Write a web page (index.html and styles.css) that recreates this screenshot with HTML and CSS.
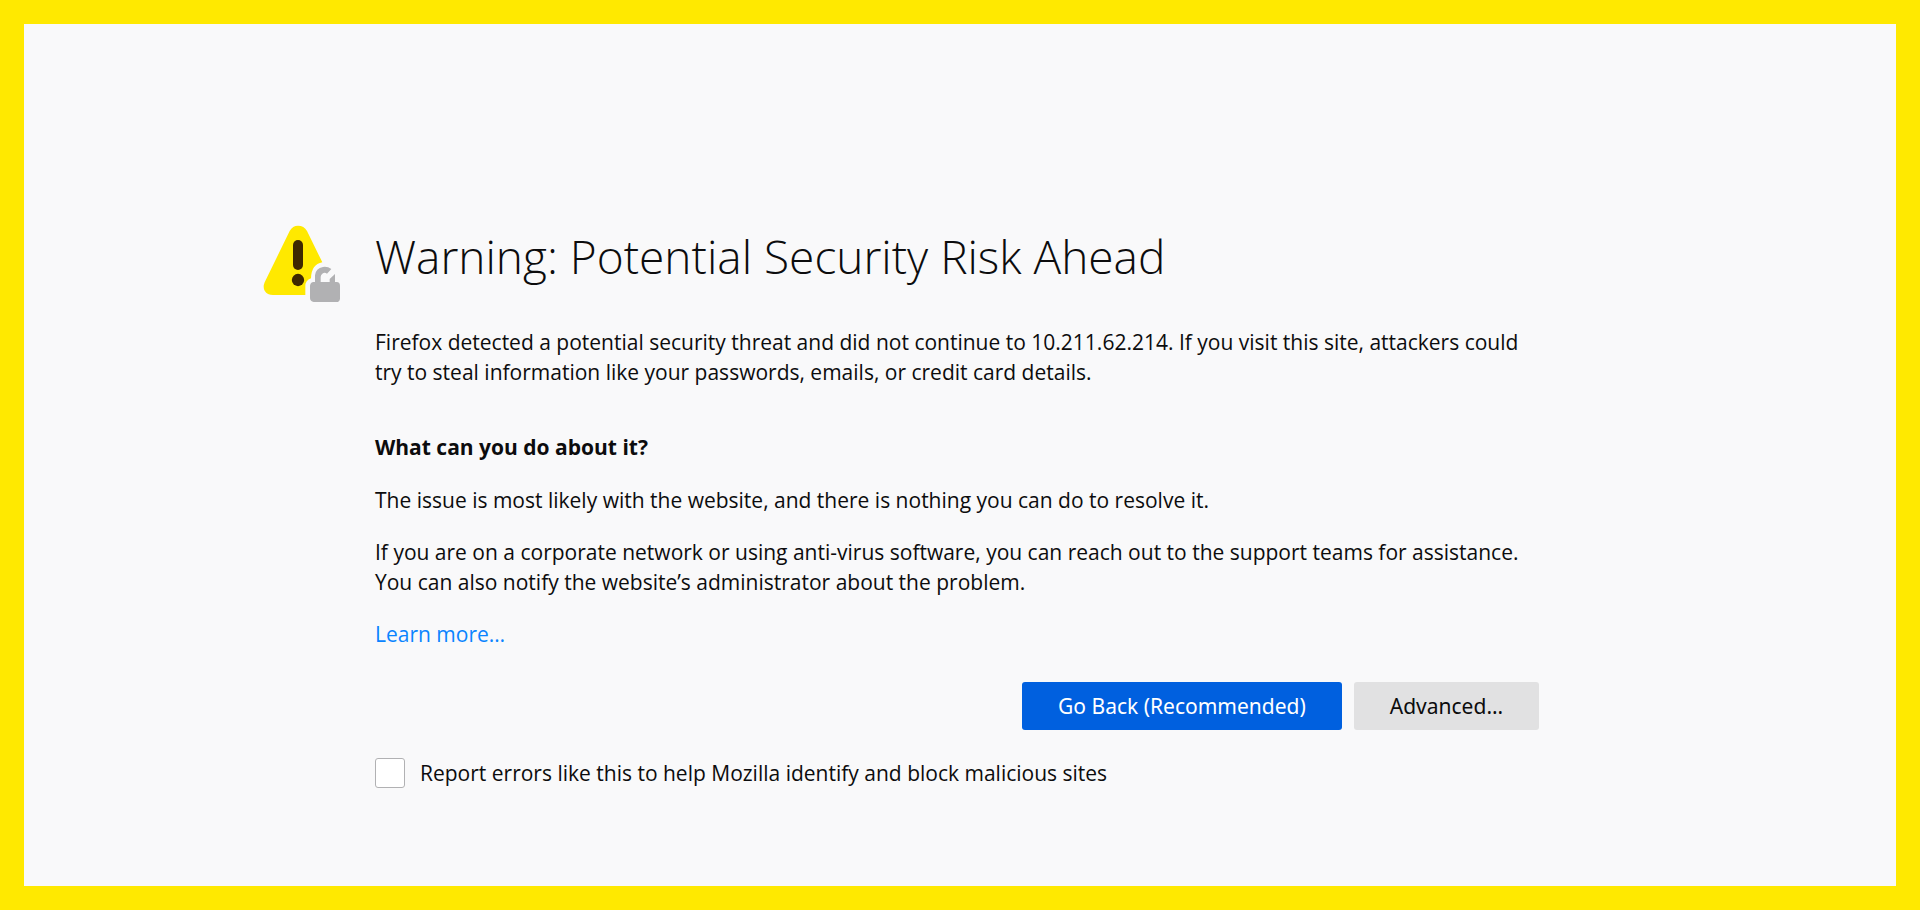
FILE: index.html
```html
<!DOCTYPE html>
<html lang="en">
<head>
<meta charset="utf-8">
<meta name="viewport" content="width=device-width, initial-scale=1">
<title>Warning: Potential Security Risk Ahead</title>
<link rel="stylesheet" href="styles.css">
</head>
<body>
<main class="page">
  <div class="container">
    <svg class="warning-icon" viewBox="39 30 234 234" aria-hidden="true">
      <path class="triangle" d="M119 48Q128 32 144 32Q162 32 171 48L217 142Q184 148 183 190Q166 196 166 214V240H69Q52 240 44 227Q38 216 44 202Z"/>
      <rect class="mark" x="129" y="75" width="30" height="90" rx="15"/>
      <circle class="mark" cx="144" cy="195" r="18.500"/>
      <path class="lock" d="M195 201V181Q197 160 219 156Q233 154 244 162L231 176Q224 171 217 176Q212 180 212 186V201H239V192L255 177V201H260Q270 202 270 212V251Q269 261 259 261H191Q181 260 180 250V212Q181 202 191 201Z"/>
    </svg>
    <div class="content">
      <h1 class="title">Warning: Potential Security Risk Ahead</h1>
      <p class="intro">Firefox detected a potential security threat and did not continue to 10.211.62.214. If you visit this site, attackers could<br>try to steal information like your passwords, emails, or credit card details.</p>
      <h2 class="subtitle">What can you do about it?</h2>
      <p class="text">The issue is most likely with the website, and there is nothing you can do to resolve it.</p>
      <p class="text">If you are on a corporate network or using anti-virus software, you can reach out to the support teams for assistance.<br>You can also notify the website’s administrator about the problem.</p>
      <p class="text"><a class="link" href="#">Learn more…</a></p>
      <div class="buttons">
        <button class="button primary" type="button">Go Back (Recommended)</button>
        <button class="button" type="button">Advanced…</button>
      </div>
      <div class="report">
        <input class="checkbox" type="checkbox" id="report">
        <label for="report">Report errors like this to help Mozilla identify and block malicious sites</label>
      </div>
    </div>
  </div>
</main>
</body>
</html>
```
FILE: styles.css
```css
* {
  box-sizing: border-box;
}

body {
  margin: 0;
  background: #f9f9fa;
  color: #0c0c0d;
  font-family: "Segoe UI", "Open Sans", "Noto Sans", sans-serif;
  font-size: 21px;
  line-height: 30px;
}

.page {
  display: flex;
  justify-content: center;
  min-height: 100vh;
  padding: 201px 90px 24px;
  border: 24px solid #ffe900;
}

.container {
  display: flex;
  align-items: flex-start;
  gap: 34px;
  width: 100%;
  max-width: 1394px;
  padding-right: 118px;
}

.warning-icon {
  flex: none;
  width: 78px;
  height: 78px;
}

.triangle {
  fill: #ffe900;
}

.mark {
  fill: #3e2800;
}

.lock {
  fill: #b1b1b3;
}

.content {
  flex: 1;
  min-width: 0;
}

.title {
  margin: 0 0 40px;
  font-size: 46px;
  font-weight: 300;
  line-height: 62px;
}

.intro {
  margin: 0 0 45px;
}

.subtitle {
  margin: 0 0 23px;
  font-size: 21px;
  font-weight: 700;
}

.text {
  margin: 0 0 22px;
}

.link {
  color: #0a84ff;
  text-decoration: none;
}

.buttons {
  display: flex;
  flex-wrap: wrap;
  justify-content: flex-end;
  gap: 12px;
  margin-top: 33px;
}

.button {
  min-width: 184px;
  min-height: 48px;
  padding: 0 36px;
  border: 0;
  border-radius: 3px;
  background: #e1e1e2;
  color: #0c0c0d;
  font-family: "Noto Sans", sans-serif;
  font-size: 21px;
}

.primary {
  background: #0060df;
  color: #fff;
}

.report {
  display: flex;
  align-items: center;
  gap: 15px;
  margin-top: 28px;
}

.checkbox {
  appearance: none;
  flex: none;
  width: 30px;
  height: 30px;
  margin: 0;
  border: 1px solid #b1b1b3;
  border-radius: 3px;
  background: #fff;
}
```
